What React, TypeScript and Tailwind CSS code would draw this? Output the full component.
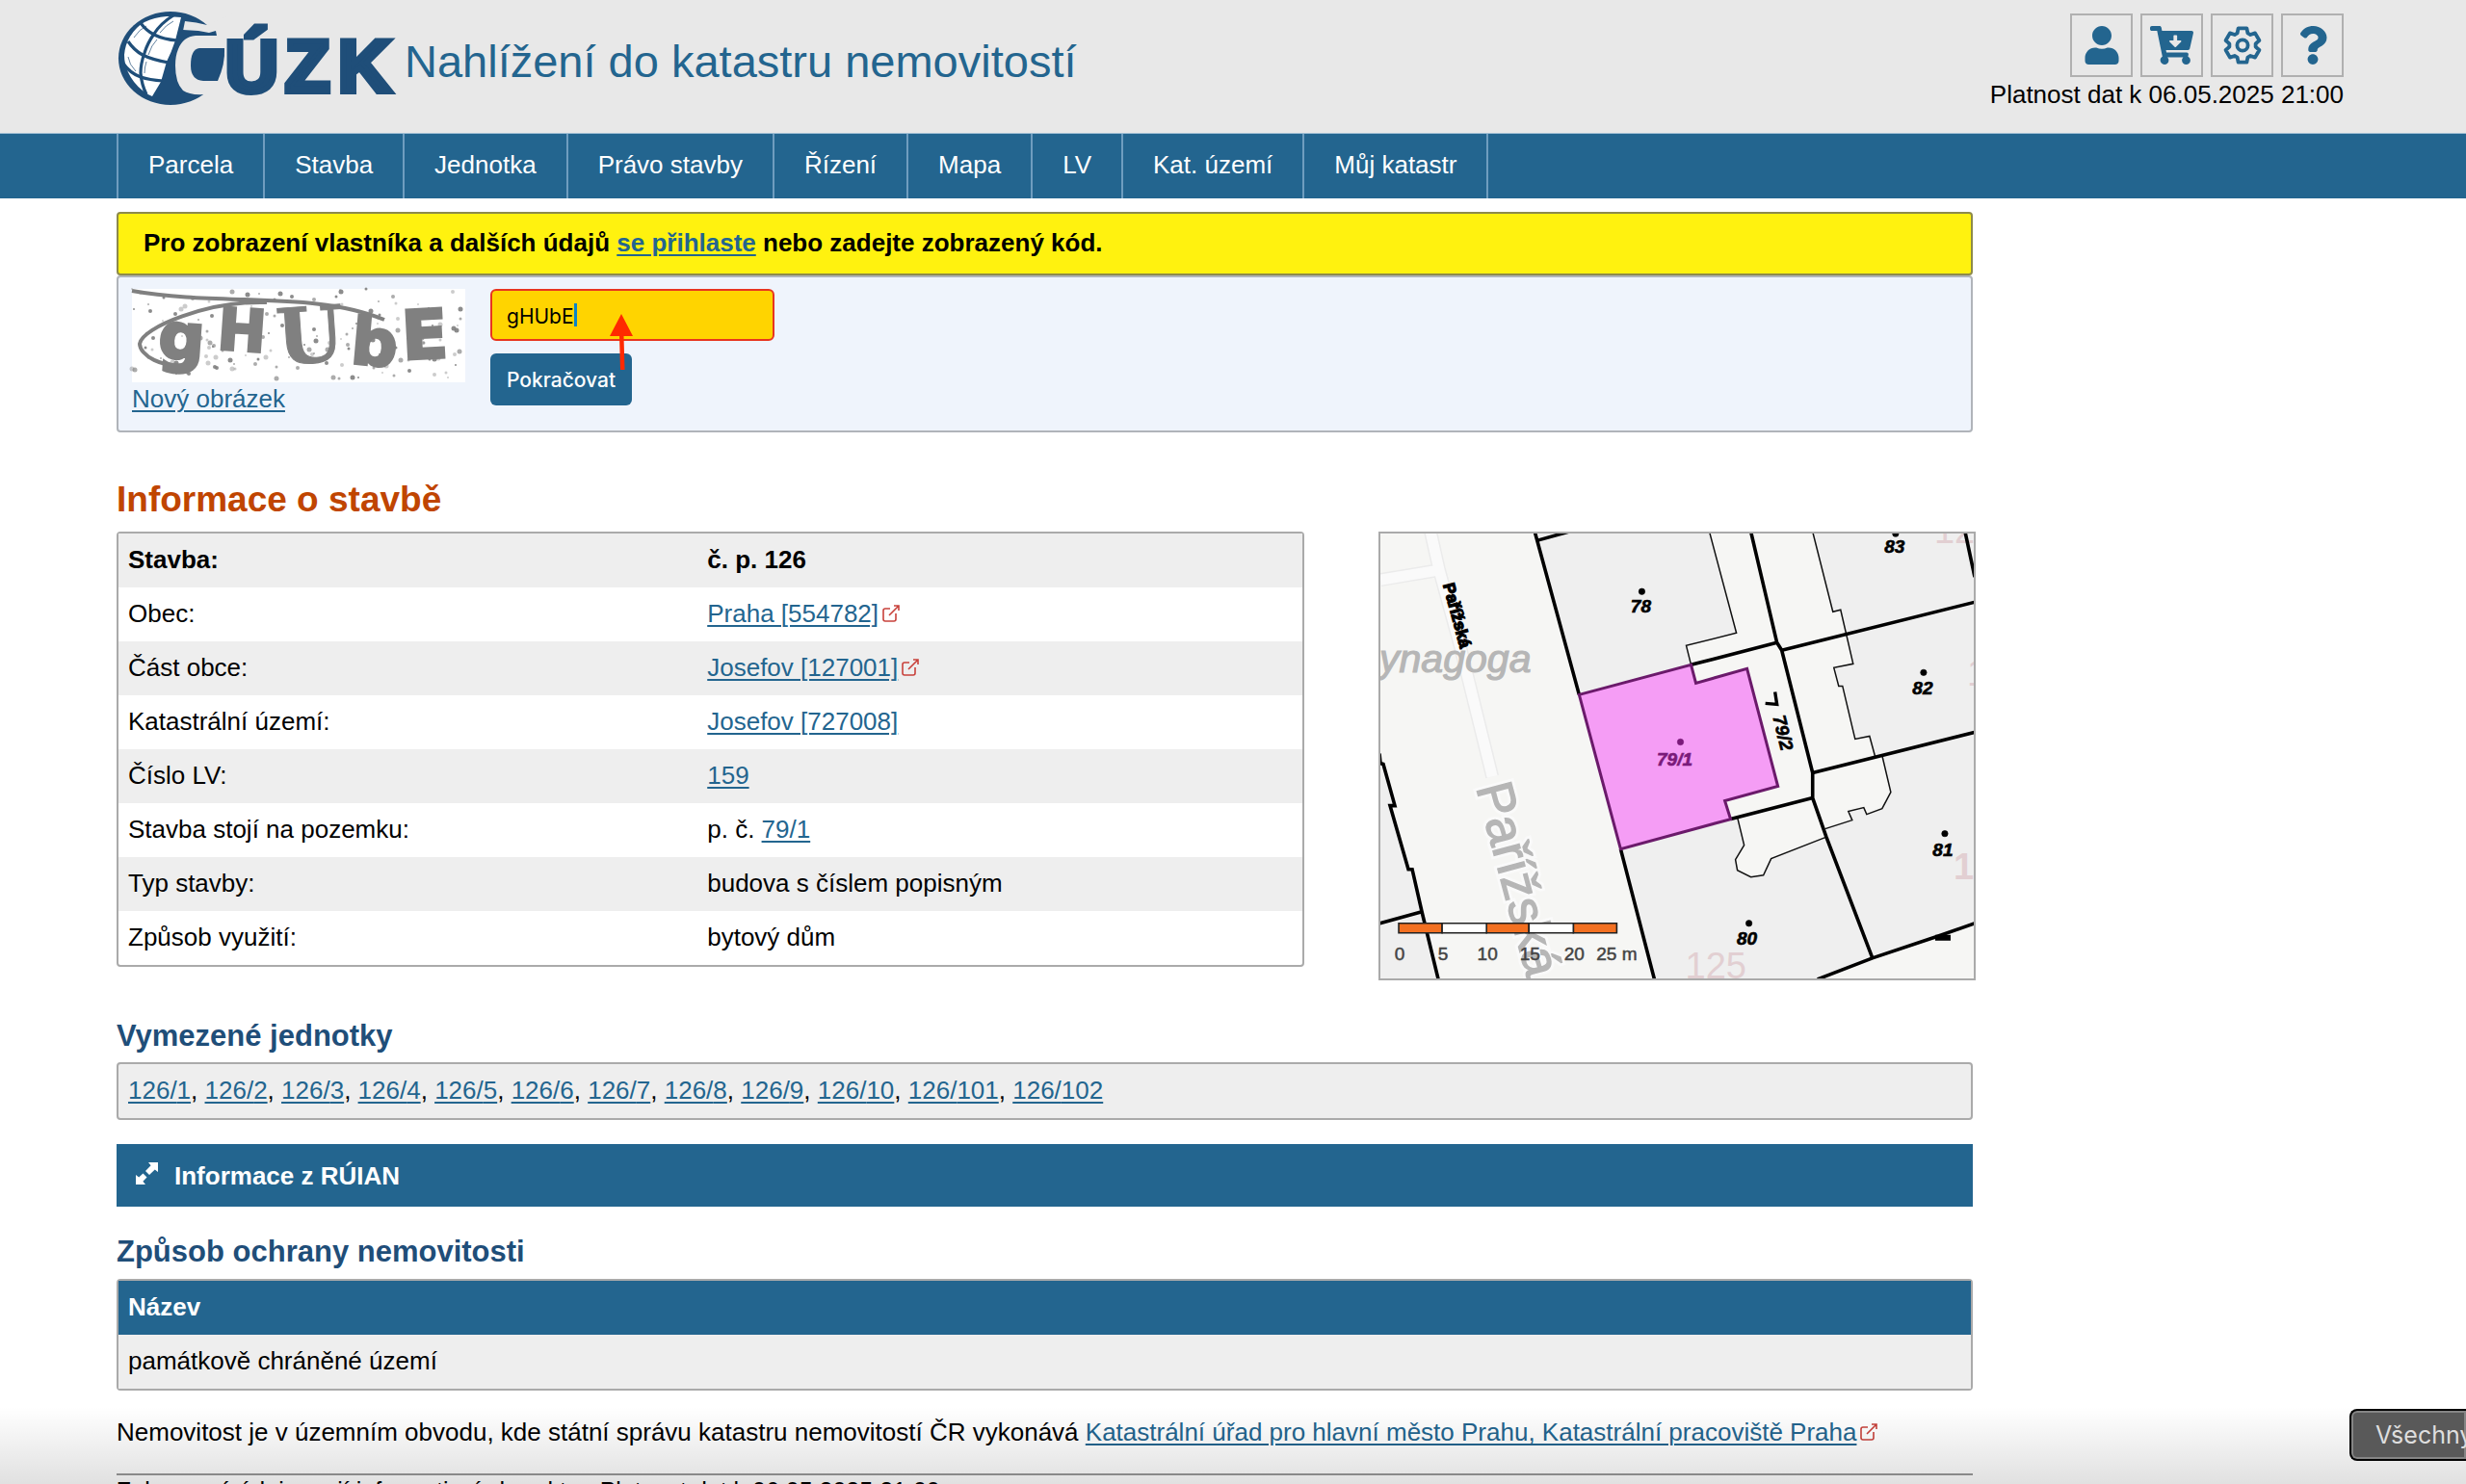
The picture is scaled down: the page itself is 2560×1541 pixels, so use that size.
import { useState } from 'react'
import { FaUser, FaCartArrowDown, FaQuestion } from 'react-icons/fa'

const navItems = ['Parcela', 'Stavba', 'Jednotka', 'Právo stavby', 'Řízení', 'Mapa', 'LV', 'Kat. území', 'Můj katastr']

const units = ['1', '2', '3', '4', '5', '6', '7', '8', '9', '10', '101', '102']

interface InfoRow {
  label: string
  text?: string
  link?: string
  external?: boolean
  bold?: boolean
}

const infoRows: InfoRow[] = [
  { label: 'Stavba:', text: 'č. p. 126', bold: true },
  { label: 'Obec:', link: 'Praha [554782]', external: true },
  { label: 'Část obce:', link: 'Josefov [127001]', external: true },
  { label: 'Katastrální území:', link: 'Josefov [727008]' },
  { label: 'Číslo LV:', link: '159' },
  { label: 'Stavba stojí na pozemku:', text: 'p. č. ', link: '79/1' },
  { label: 'Typ stavby:', text: 'budova s číslem popisným' },
  { label: 'Způsob využití:', text: 'bytový dům' },
]

// six-toothed gear, one tooth rotated around the centre
const gearPoints = [0, 60, 120, 180, 240, 300]
  .flatMap((deg) => {
    const a = (deg * Math.PI) / 180
    return [[-5.4, -12.6], [-4.4, -17.6], [4.4, -17.6], [5.4, -12.6]].map(
      ([x, y]) => `${x * Math.cos(a) - y * Math.sin(a)},${x * Math.sin(a) + y * Math.cos(a)}`
    )
  })
  .join(' ')

// pseudo random specks behind the code
const specks = Array.from({ length: 170 }, (_, i) => ({
  x: (i * 73 + ((i * i) % 41) * 5) % 342,
  y: (i * 37 + ((i * i) % 23) * 7) % 94,
  r: 1 + (i % 4) * 0.5,
  o: 0.4 + (i % 3) * 0.25,
}))

function GearIcon() {
  return (
    <svg className="w-10 h-10" viewBox="-20 -20 40 40" fill="none" stroke="currentColor" strokeLinejoin="round">
      <polygon points={gearPoints} strokeWidth={3.8} />
      <circle r={5.6} strokeWidth={3.8} />
    </svg>
  )
}

function ExpandIcon() {
  return (
    <svg className="w-[25px] h-[25px] mb-1" viewBox="0 0 25 25" fill="currentColor">
      <path d="M14 1H24V11L20.8 8.4L15 14L11 10L16.6 4.2Z" />
      <path d="M11 24H1V14L4.2 16.6L8.5 12.5L12.5 16.5L8.4 20.8Z" />
    </svg>
  )
}

function ExternalIcon() {
  return (
    <svg className="inline-block w-[18px] h-[18px] ml-1 mb-1 text-[#c8413b]" viewBox="0 0 18 18" fill="none" stroke="currentColor" strokeWidth={1.6}>
      <path d="M8 4H3Q1 4 1 6V15Q1 17 3 17H12Q14 17 14 15V9" />
      <path d="M7 11L17 1M12 1H17V6" />
    </svg>
  )
}

function Logo() {
  return (
    <svg className="w-[292px] h-[104px] overflow-visible" viewBox="120 8 292 104">
      <ellipse cx="177" cy="60.5" rx="54" ry="48.5" fill="#1f4e79" />
      <path d="M188 18Q185 30 182 42Q178 54 173 64L167 85L158 100Q153 98 148 94Q138 86 133 75Q129 66 129 57Q130 46 135 38Q141 28 150 23Q160 18 173 17Z" fill="#fff" />
      <g fill="none" stroke="#1f4e79" strokeWidth="3.2">
        <path d="M180 16Q167 24 160 35Q153 45 150 55Q146 66 146 76Q147 88 152 98" />
        <path d="M146 24Q152 32 160 36Q170 41 184 42" />
        <path d="M133 43Q139 52 148 57Q158 62 175 65" />
        <path d="M128 66Q135 76 146 80Q155 83 169 84" />
      </g>
      <g fill="none" stroke="#1f4e79" strokeWidth="0.7">
        <path d="M139 39Q145 30 152 27M166 34Q172 26 180 22M154 57Q157 47 163 41M150 76Q150 70 152 64M133 59Q134 67 141 74" />
      </g>
      <path d="M240 37H203Q190 38 185 51Q182 58 182 68Q182 86 190 94Q197 99 212 98H240Z" fill="#e8e8e8" />
      <path d="M192 22Q204 23 215 26L242 14V40H225L224 32L218 35L190 32Z" fill="#e8e8e8" />
      <path d="M190 31L206 32L217 34L224 32L225 37H190Z" fill="#1f4e79" />
      <path d="M207 50H233Q234 66 226 84H211Q198 83 198 68Q198 51 207 50Z" fill="#1f4e79" />
      <text y="95" x="234 296 351" fontSize="76" fontWeight="700" fill="#1f4e79" stroke="#1f4e79" strokeWidth="6" fontFamily="'Liberation Sans', sans-serif">ÚZK</text>
    </svg>
  )
}

function Captcha() {
  return (
    <svg className="block w-[346px] h-[97px] bg-white overflow-visible" viewBox="0 0 346 97" role="img" aria-label="Kontrolní kód">
      <g fill="#808080">
        {specks.map((s, i) => (
          <ellipse key={i} cx={s.x} cy={s.y} rx={s.r} ry={s.r} opacity={s.o} />
        ))}
      </g>
      <g fill="none" stroke="#808080" strokeWidth="4">
        <path d="M0 2C90 18 190 2 262 32" />
        <path d="M140 14C80 12 10 40 8 57C8 68 30 84 62 78" />
      </g>
      <g fill="#808080" stroke="#808080" strokeWidth="3" fontWeight="700" fontFamily="'DejaVu Sans', sans-serif">
        <text x="27" y="73" fontSize="67" transform="rotate(4 50 60)">g</text>
        <text x="89" y="64" fontSize="60" transform="rotate(4 115 45)">H</text>
        <text x="150" y="76" fontSize="80" fontFamily="'DejaVu Serif', serif" strokeWidth="1" transform="rotate(-4 190 50)">U</text>
        <text x="228" y="79" fontSize="67" transform="rotate(5 250 55)">b</text>
        <text x="280" y="72" fontSize="70" transform="rotate(-3 306 47)">E</text>
      </g>
    </svg>
  )
}

function ParcelMap() {
  return (
    <svg className="block w-full h-full" viewBox="0 0 615 461" fontFamily="'Liberation Sans', sans-serif">
      <rect width="615" height="461" fill="#f6f6f4" />
      <g fill="none" strokeLinejoin="round">
        <path d="M0 48L60 38M52 -2L61 38L83 118L116 252" stroke="#ebebeb" strokeWidth="14" />
        <path d="M0 48L60 38M52 -2L61 38L83 118L116 252" stroke="#fafafa" strokeWidth="11" />
      </g>
      <g fill="#efefef">
        <path d="M160 -2L206 167L322 136L317 116L369 103L341 -2Z" />
        <path d="M249 327L370 294L377 323L368 338L370 349L384 356L397 354L405 337L461 315L510 440L453 462H284Z" />
        <path d="M448 -2L469 81L477 79L490 135L470 139L475 158L479 158L492 213L507 210L513 232L616 206V-2Z" />
        <path d="M520 230L529 268L520 285L504 291L501 284L485 288L489 297L461 306L510 440L616 404V206Z" />
        <path d="M0 238L3 239L15 282H10L29 348H33L43 392L60 462H0Z" />
      </g>
      <g fill="#e2cfd2" fontSize="38">
        <text x="574" y="10">12</text>
        <text x="608" y="158">1</text>
        <text x="594" y="358" fontWeight="700">1</text>
        <text x="316" y="461">125</text>
      </g>
      <g fill="#b6b6b6">
        <text x="-1" y="144" fontSize="41" fontStyle="italic" stroke="#b6b6b6" strokeWidth="1.2">ynagoga</text>
        <g fontSize="53" transform="rotate(75 99 263)">
          <text x="99" y="263" stroke="#fafafa" strokeWidth="7">Pařížská</text>
          <text x="99" y="263" stroke="#b6b6b6" strokeWidth="1.4">Pařížská</text>
        </g>
      </g>
      <path d="M206 167L322 136L327 155L380 140L412 262L357 277L363 296L249 327Z" fill="#f59df5" />
      <g fill="none" stroke="#111" strokeWidth="1.5">
        <path d="M341 -2L369 103L317 116L322 136" />
        <path d="M448 -2L469 81L477 79L490 135L470 139L475 158L479 158L492 213L507 210L513 232" />
        <path d="M520 230L529 268L520 285L504 291L501 284L485 288L489 297L461 306" />
        <path d="M370 294L377 323L368 338L370 349L384 356L397 354L405 337L461 315" />
      </g>
      <g fill="none" stroke="#000" strokeWidth="3.6">
        <path d="M160 -2L206 167M249 327L284 462M163 7L199 -3" />
        <path d="M-1 228L0 238L3 239L15 282H10L29 348H33L43 392L60 462M-1 404L43 392" />
        <path d="M384 -2L411 113L416 121L448 248V274L462 314L510 440" />
        <path d="M322 136L411 113M416 121L616 71M448 248L616 206M363 296L448 274" />
        <path d="M453 462L510 440L579 417L616 404M606 -2L616 45" />
      </g>
      <path d="M206 167L322 136L327 155L380 140L412 262L357 277L363 296L249 327Z" fill="none" stroke="#6b1a6b" strokeWidth="3" />
      <path d="M576 417H590V421H576Z" fill="#000" stroke="#000" strokeWidth="2" />
      <g fontSize="19" fontWeight="700" fontStyle="italic" textAnchor="middle" stroke="#000" strokeWidth="0.6">
        <circle cx="271" cy="60" r="3.2" />
        <text x="270" y="82">78</text>
        <circle cx="534" cy="0" r="3.2" />
        <text x="533" y="20">83</text>
        <circle cx="563" cy="144" r="3.2" />
        <text x="562" y="167">82</text>
        <circle cx="585" cy="311" r="3.2" />
        <text x="583" y="334">81</text>
        <circle cx="382" cy="404" r="3.2" />
        <text x="380" y="426">80</text>
        <g fill="#7a1a7a" stroke="#7a1a7a">
          <circle cx="311" cy="216" r="3.2" />
          <text x="305" y="240">79/1</text>
        </g>
        <text x="411" y="208" transform="rotate(76 411 208)">79/2</text>
      </g>
      <path d="M409 164L411 177L399 176" fill="none" stroke="#000" strokeWidth="3.4" />
      <text x="65" y="53" fontSize="17" fontWeight="700" stroke="#000" strokeWidth="1.4" transform="rotate(75 65 53)">Pařížská</text>
      <g stroke="#222" strokeWidth="1.6">
        <path d="M19 404H64V414H19ZM110 404H154V414H110ZM200 404H245V414H200Z" fill="#f37021" />
        <path d="M64 404H110V414H64ZM154 404H200V414H154Z" fill="#fff" />
      </g>
      <g fontSize="19" fill="#444" stroke="#444" strokeWidth="0.5" textAnchor="middle">
        <text x="20" y="442">0</text>
        <text x="65" y="442">5</text>
        <text x="111" y="442">10</text>
        <text x="155" y="442">15</text>
        <text x="201" y="442">20</text>
        <text x="245" y="442">25 m</text>
      </g>
    </svg>
  )
}

const linkClass = 'text-[#23658f] underline decoration-2 underline-offset-3'
const iconButtonClass = 'w-[65px] h-[66px] border-2 border-[#b0b0b0] flex items-center justify-center text-[#23658f]'

export default function App() {
  const [code, setCode] = useState('gHUbE')

  return (
    <div className="relative h-screen overflow-hidden bg-white text-black text-[26px] leading-[30px] font-['Liberation_Sans',Arial,sans-serif]">
      <header className="h-[138px] bg-[#e8e8e8] pl-[120px] pr-[127px] flex justify-between">
        <div className="flex items-start pt-2 gap-2">
          <Logo />
          <p className="pt-7 text-[47px] leading-[56px] text-[#23658f]">Nahlížení do katastru nemovitostí</p>
        </div>
        <div className="flex flex-col items-end gap-[3px] pt-[14px]">
          <div className="flex gap-2">
            <button aria-label="Přihlášení" className={iconButtonClass}><FaUser className="w-10 h-10" /></button>
            <button aria-label="Košík" className={iconButtonClass}><FaCartArrowDown className="w-[45px] h-10" /></button>
            <button aria-label="Nastavení" className={iconButtonClass}><GearIcon /></button>
            <button aria-label="Nápověda" className={iconButtonClass}><FaQuestion className="w-10 h-10" /></button>
          </div>
          <p>Platnost dat k 06.05.2025 21:00</p>
        </div>
      </header>

      <nav className="h-[68px] bg-[#23658f] border-t border-[#9dbdd3] pl-[121px] flex">
        {navItems.map((item, i) => (
          <a
            key={item}
            href="#"
            className={`px-[31px] pb-[3px] flex items-center text-white border-r-2 border-[#6f9dbf] ${i === 0 ? 'border-l-2' : ''}`}
          >
            {item}
          </a>
        ))}
      </nav>

      <div className="pl-[121px] pr-[127px]">
        <main className="w-5/6 pt-[14px]">
          <div className="h-[66px] bg-[#fff20f] border-2 border-[#8d8a4a] rounded-sm px-[26px] pb-[2px] flex items-center font-bold">
            <p>
              Pro zobrazení vlastníka a dalších údajů <a href="#" className={linkClass}>se přihlaste</a> nebo zadejte zobrazený kód.
            </p>
          </div>
          <form
            className="bg-[#eff4fc] border-2 border-[#b0b4ba] rounded-sm px-[14px] pt-3 pb-[18px] flex gap-[26px]"
            onSubmit={(e) => e.preventDefault()}
          >
            <div>
              <Captcha />
              <a href="#" className={`block mt-[2px] ${linkClass}`}>Nový obrázek</a>
            </div>
            <div className="relative flex flex-col items-start gap-[13px] text-[21px] font-['Inter',sans-serif]">
              <input
                type="text"
                aria-label="Zobrazený kód"
                value={code}
                onChange={(e) => setCode(e.target.value)}
                className="w-[295px] h-[54px] px-[15px] pt-[2px] bg-[#ffd400] border-2 border-[#e8351f] rounded-md"
              />
              <span className="absolute left-[87px] top-[15px] w-[3px] h-6 bg-[#0a84c8]" />
              <button type="submit" className="h-[54px] px-[17px] pt-[2px] bg-[#23658f] text-white font-medium rounded-md">
                Pokračovat
              </button>
              <svg className="absolute left-[124px] top-[26px] w-6 h-[60px]" viewBox="0 0 24 60" fill="#ff2a00">
                <path d="M12 0L24 23H14.5L15.5 58H11L10 23H0Z" />
              </svg>
            </div>
          </form>

          <h1 className="mt-[49px] mb-3 text-[37px] leading-[42px] font-bold text-[#c04500]">Informace o stavbě</h1>
          <div className="flex items-start gap-[77px]">
            <div className="w-[64%] shrink-0 border-2 border-[#aaa] rounded-sm">
              <table className="w-full table-fixed">
                <tbody>
                  {infoRows.map((row) => (
                    <tr key={row.label} className={`h-14 odd:bg-[#eee] ${row.bold ? 'font-bold' : ''}`}>
                      <td className="w-[49%] px-[10px] pb-[3px]">{row.label}</td>
                      <td className="px-[9px] pb-[3px]">
                        {row.text}
                        {row.link && <a href="#" className={linkClass}>{row.link}</a>}
                        {row.external && <ExternalIcon />}
                      </td>
                    </tr>
                  ))}
                </tbody>
              </table>
            </div>
            <div className="w-[620px] h-[466px] shrink-0 border-2 border-[#aaa]">
              <ParcelMap />
            </div>
          </div>

          <h2 className="mt-10 mb-[9px] text-[31px] leading-9 font-bold text-[#1f4e79]">Vymezené jednotky</h2>
          <div className="h-[60px] px-[10px] pb-[2px] flex items-center bg-[#eee] border-2 border-[#aaa] rounded-sm">
            <p>
              {units.map((u, i) => (
                <span key={u}>
                  {i > 0 && ', '}
                  <a href="#" className={linkClass}>126/{u}</a>
                </span>
              ))}
            </p>
          </div>

          <button className="mt-[25px] w-full h-[65px] px-[19px] flex items-center gap-4 bg-[#23658f] text-white font-bold">
            <ExpandIcon />
            Informace z RÚIAN
          </button>

          <h2 className="mt-[29px] mb-[10px] text-[31px] leading-9 font-bold text-[#1f4e79]">Způsob ochrany nemovitosti</h2>
          <div className="border-2 border-[#aaa] rounded-sm">
            <table className="w-full">
              <thead>
                <tr className="h-14 bg-[#23658f] text-white text-left">
                  <th className="px-[10px] pb-[3px]">Název</th>
                </tr>
              </thead>
              <tbody>
                <tr className="h-14 bg-[#eee]">
                  <td className="px-[10px] pb-[3px]">památkově chráněné území</td>
                </tr>
              </tbody>
            </table>
          </div>

          <p className="mt-7">
            Nemovitost je v územním obvodu, kde státní správu katastru nemovitostí ČR vykonává{' '}
            <a href="#" className={linkClass}>Katastrální úřad pro hlavní město Prahu, Katastrální pracoviště Praha</a>
            <ExternalIcon />
          </p>
          <p className="mt-7 pt-[2px] border-t-2 border-[#999] text-[25px] leading-7">
            Zobrazené údaje mají informativní charakter. Platnost dat k 06.05.2025 21:00
          </p>
        </main>
      </div>

      <div className="absolute inset-x-0 bottom-0 h-20 bg-linear-to-b from-black/0 to-black/12 pointer-events-none" />
      <div className="absolute right-0 bottom-6 w-[121px] h-[54px] pl-[25px] flex items-center overflow-hidden whitespace-nowrap rounded-l-lg border-2 border-r-0 border-black bg-[#595959] shadow-[inset_0_0_0_2px_#858585] text-[25px] text-[#dedede] font-['Inter',sans-serif]">
        Všechny
      </div>
    </div>
  )
}
